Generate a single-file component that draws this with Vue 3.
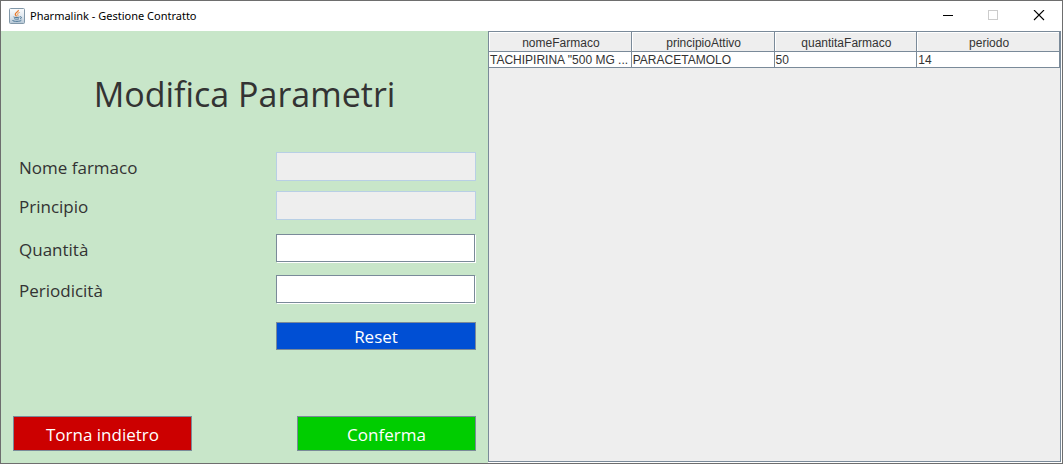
<script setup>
import { ref } from 'vue'

const fields = ref([
  { id: 'nome', label: 'Nome farmaco', value: '', disabled: true },
  { id: 'principio', label: 'Principio', value: '', disabled: true },
  { id: 'quantita', label: 'Quantità', value: '', disabled: false },
  { id: 'periodicita', label: 'Periodicità', value: '', disabled: false },
])

const columns = ['nomeFarmaco', 'principioAttivo', 'quantitaFarmaco', 'periodo']
const rows = [['TACHIPIRINA "500 MG ...', 'PARACETAMOLO', '50', '14']]

function reset() {
  fields.value.forEach((field) => {
    field.value = ''
  })
}
</script>

<template>
  <div class="window">
    <header class="titlebar">
      <svg class="app-icon" viewBox="0 0 16 16" aria-hidden="true">
        <defs>
          <linearGradient id="tile" x1="0" y1="0" x2="0" y2="1">
            <stop offset="0" stop-color="#fbfcfd" />
            <stop offset="0.5" stop-color="#e3eaf0" />
            <stop offset="1" stop-color="#b4c6d5" />
          </linearGradient>
        </defs>
        <rect x="0.5" y="0.5" width="15" height="15" rx="1" fill="url(#tile)" stroke="#8298a9" />
        <path d="M9.3 2 C9.8 4 6 4.6 6.3 6.4 C6.4 7.2 7.3 7.6 7.4 8.4" fill="none" stroke="#e8792b" stroke-width="1.3" />
        <path d="M10.6 4.5 C8.6 5.1 8.2 6 8.8 6.8 C9.2 7.4 8.9 7.9 8.5 8.3" fill="none" stroke="#ee9347" stroke-width="1" />
        <path d="M4.6 8.8 C4.6 9.6 9 9.7 10.6 9 M5.2 10.7 C6.6 11.4 8.8 11.3 10 10.8 M11 8.8 C13 8.4 12.9 10.3 11 11 M3.6 12 C2.8 13.7 11.6 13.8 12.4 12.2" fill="none" stroke="#4a7595" stroke-width="1" />
      </svg>
      <span class="title">Pharmalink - Gestione Contratto</span>
      <div class="controls">
        <button type="button" class="control" aria-label="Riduci a icona">
          <svg viewBox="0 0 12 12" shape-rendering="crispEdges"><path d="M2 5.5H12" stroke="#000" /></svg>
        </button>
        <button type="button" class="control" aria-label="Ingrandisci" disabled>
          <svg viewBox="0 0 12 12" shape-rendering="crispEdges"><rect x="1.5" y="0.5" width="9" height="9" fill="none" stroke="#ccc" /></svg>
        </button>
        <button type="button" class="control" aria-label="Chiudi">
          <svg viewBox="0 0 12 12"><path d="M1 0L11 10M11 0L1 10" stroke="#000" stroke-width="1.1" /></svg>
        </button>
      </div>
    </header>

    <main class="content">
      <form class="panel" @submit.prevent>
        <h1>Modifica Parametri</h1>
        <div v-for="field in fields" :key="field.id" class="field" :class="field.id">
          <label :for="field.id">{{ field.label }}</label>
          <input :id="field.id" v-model="field.value" type="text" :disabled="field.disabled" />
        </div>
        <button type="button" class="button reset" @click="reset">Reset</button>
        <div class="actions">
          <button type="button" class="button back">Torna indietro</button>
          <button type="submit" class="button confirm">Conferma</button>
        </div>
      </form>

      <section class="scroll-pane">
        <table>
          <thead>
            <tr>
              <th v-for="column in columns" :key="column" scope="col">{{ column }}</th>
            </tr>
          </thead>
          <tbody>
            <tr v-for="(row, i) in rows" :key="i">
              <td v-for="(cell, j) in row" :key="j">{{ cell }}</td>
            </tr>
          </tbody>
        </table>
      </section>
    </main>
  </div>
</template>

<style>
body {
  margin: 0;
}
</style>

<style scoped>
.window {
  box-sizing: border-box;
  display: flex;
  flex-direction: column;
  min-height: 100vh;
  border: 1px solid #6e6e6e;
  background: #fff;
  color: #333;
  font-family: "Open Sans", "Noto Sans", sans-serif;
}

.titlebar {
  display: flex;
  align-items: center;
  height: 30px;
  padding-left: 8px;
  color: #000;
}

.app-icon {
  width: 16px;
  height: 16px;
  margin-right: 5px;
}

.title {
  flex: 1;
  font-family: "Noto Sans", sans-serif;
  font-size: 11px;
  line-height: 16px;
}

.controls {
  display: flex;
}

.control {
  display: flex;
  align-items: center;
  justify-content: center;
  width: 46px;
  height: 30px;
  padding: 0;
  border: 0;
  background: none;
}

.control svg {
  width: 12px;
  height: 12px;
}

.content {
  flex: 1;
  display: grid;
  grid-template-columns: 487fr 574fr;
}

.panel {
  display: flex;
  flex-direction: column;
  padding: 36px 12px 12px;
  background: #c8e6c9;
}

h1 {
  margin: 0 0 31px;
  font-size: 34px;
  font-weight: 400;
  line-height: 54px;
  text-align: center;
}

.field {
  display: flex;
  align-items: center;
  justify-content: space-between;
  height: 29px;
  margin-bottom: 10px;
  padding-left: 6px;
}

.field.principio {
  margin-bottom: 14px;
}

.field.quantita {
  margin-bottom: 12px;
}

.field.periodicita {
  margin-bottom: 18px;
}

label {
  padding-top: 2px;
  font-size: 17px;
  line-height: 27px;
}

input {
  box-sizing: border-box;
  width: 199px;
  height: 28px;
  margin: 0 1px 1px 0;
  padding: 0 4px;
  border: 1px solid #7a8a99;
  border-radius: 0;
  background: #fff;
  box-shadow: 1px 1px #fff;
  color: #333;
  font: 17px "Open Sans", "Noto Sans", sans-serif;
}

input:disabled {
  width: 200px;
  height: 29px;
  margin: 0;
  border-color: #b8cfe5;
  background: #eee;
  box-shadow: none;
}

.button {
  box-sizing: border-box;
  width: 179px;
  height: 35px;
  padding: 2px 0 0;
  border: 1px solid #7a8a99;
  border-radius: 0;
  color: #fff;
  font: 17px/24px "Open Sans", "Noto Sans", sans-serif;
}

.reset {
  align-self: flex-end;
  width: 200px;
  height: 28px;
  background: #004fd4;
}

.actions {
  display: flex;
  justify-content: space-between;
  margin-top: auto;
}

.back {
  background: #c00;
}

.confirm {
  background: #00cd00;
}

.scroll-pane {
  margin: 0 1px 1px 0;
  border: 1px solid #7a8a99;
  background: #eee;
}

table {
  width: 100%;
  border-collapse: separate;
  border-spacing: 0;
  table-layout: fixed;
  font: 12px/14px "Liberation Sans", Arial, sans-serif;
}

th,
td {
  overflow: hidden;
  padding: 1px 0 0 1px;
  border-right: 1px solid #7a8a99;
  border-bottom: 1px solid #7a8a99;
  text-align: left;
  white-space: nowrap;
}

th {
  height: 17px;
  padding: 2px 0 0 2px;
  box-shadow: inset 1px 1px #fff;
  font-weight: 400;
  text-align: center;
}

td {
  height: 14px;
  background: #fff;
}
</style>
